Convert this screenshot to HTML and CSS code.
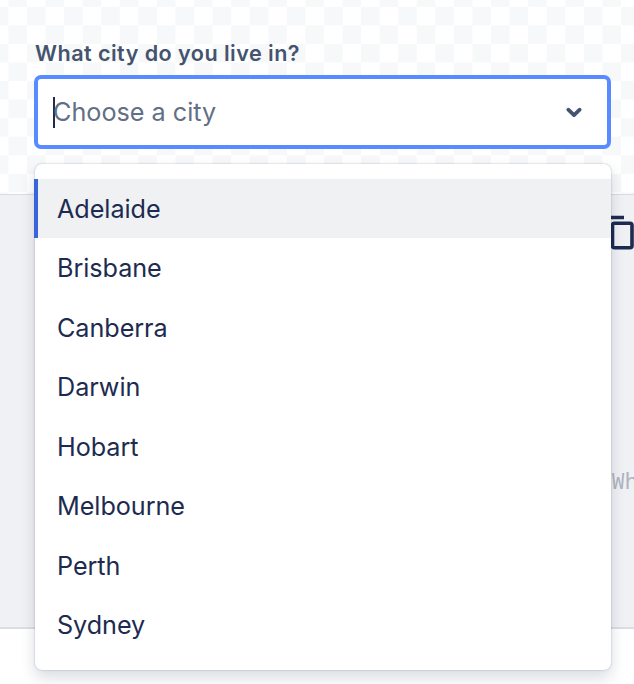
FILE: index.html
```html
<!DOCTYPE html>
<html lang="en">
<head>
<meta charset="utf-8">
<title>City select</title>
<link rel="stylesheet" href="styles.css">
</head>
<body>
<main class="example">
  <section class="preview">
    <label class="label" for="city"><span>What city do you live in?</span></label>
    <div class="field">
      <div class="control" id="city">
        <span class="caret"></span>
        <span class="placeholder">Choose a city</span>
        <svg class="chevron" width="18" height="14" viewBox="0 0 18 14"><path d="M3.300 4.700 9 10.100 14.700 4.700" fill="none" stroke="#44546f" stroke-width="3.800" stroke-linecap="round" stroke-linejoin="round"/></svg>
      </div>
      <ul class="menu">
        <li class="option focused">Adelaide</li>
        <li class="option">Brisbane</li>
        <li class="option">Canberra</li>
        <li class="option">Darwin</li>
        <li class="option">Hobart</li>
        <li class="option">Melbourne</li>
        <li class="option">Perth</li>
        <li class="option">Sydney</li>
      </ul>
    </div>
  </section>
  <section class="source">
    <svg class="copy" width="32" height="40" viewBox="0 0 32 40"><path d="M3 24V8q0-2.500 2.500-2.500H22" fill="none" stroke="#1d2b50" stroke-width="3.600"/><rect x="10.500" y="11.200" width="19.500" height="24.600" rx="2" fill="none" stroke="#1d2b50" stroke-width="3.600"/></svg>
    <code class="comment">Wh</code>
  </section>
</main>
</body>
</html>
```
FILE: styles.css
```css
* { box-sizing: border-box; }
body {
  margin: 0;
  background: #fff;
  color: #1d2b50;
  font-family: Inter, "Liberation Sans", sans-serif;
  overflow: hidden;
}
.example { height: 684px; }
.preview {
  height: 194px;
  padding: 39px 23px 0 34px;
  background: conic-gradient(#f7f8f9 25%, #fff 0 50%, #f7f8f9 0 75%, #fff 0) 8.4px 6.8px / 37.14px 37.14px;
}
.label {
  display: block;
  height: 36px;
  padding-left: 1px;
  color: #44546f;
  font-size: 21.6px;
  font-weight: 600;
  line-height: 29px;
  letter-spacing: 0.45px;
  white-space: nowrap;
}
.field { position: relative; }
.control {
  display: flex;
  align-items: center;
  height: 74px;
  padding: 0 24px 0 15px;
  border: 4px solid #578bff;
  border-radius: 7px;
  background: #fff;
}
.caret { width: 2px; height: 31px; margin-right: -2px; background: #1d2b50; }
.placeholder {
  flex: 1;
  color: #626f86;
  font-size: 25.2px;
  line-height: 37px;
}
.menu {
  position: absolute;
  z-index: 1;
  top: 89px;
  left: 1px;
  width: 576px;
  height: 506px;
  margin: 0;
  padding: 15px 0;
  list-style: none;
  border-radius: 7px;
  background: #fff;
  box-shadow: 0 7.400px 14.900px rgba(9, 30, 66, 0.15), 0 0 1.900px rgba(9, 30, 66, 0.31);
}
.option {
  height: 59.430px;
  padding: 11px 22px;
  font-size: 25.2px;
  line-height: 38px;
  letter-spacing: -0.05px;
}
.focused {
  margin-left: -1px;
  padding-left: 23px;
  background: #f0f1f3;
  box-shadow: inset 4px 0 #3965db;
}
.source {
  display: flex;
  flex-direction: column;
  align-items: flex-end;
  height: 435px;
  border-top: 1px solid #d9dbe3;
  border-bottom: 2px solid #dcdde5;
  background: #f0f1f4;
}
.copy { margin-top: 17px; }
.comment {
  margin-top: 214px;
  margin-right: -4px;
  color: #aeb4c0;
  font-family: "Noto Sans Mono", "Liberation Mono", monospace;
  font-size: 22px;
  line-height: 28px;
}
```
